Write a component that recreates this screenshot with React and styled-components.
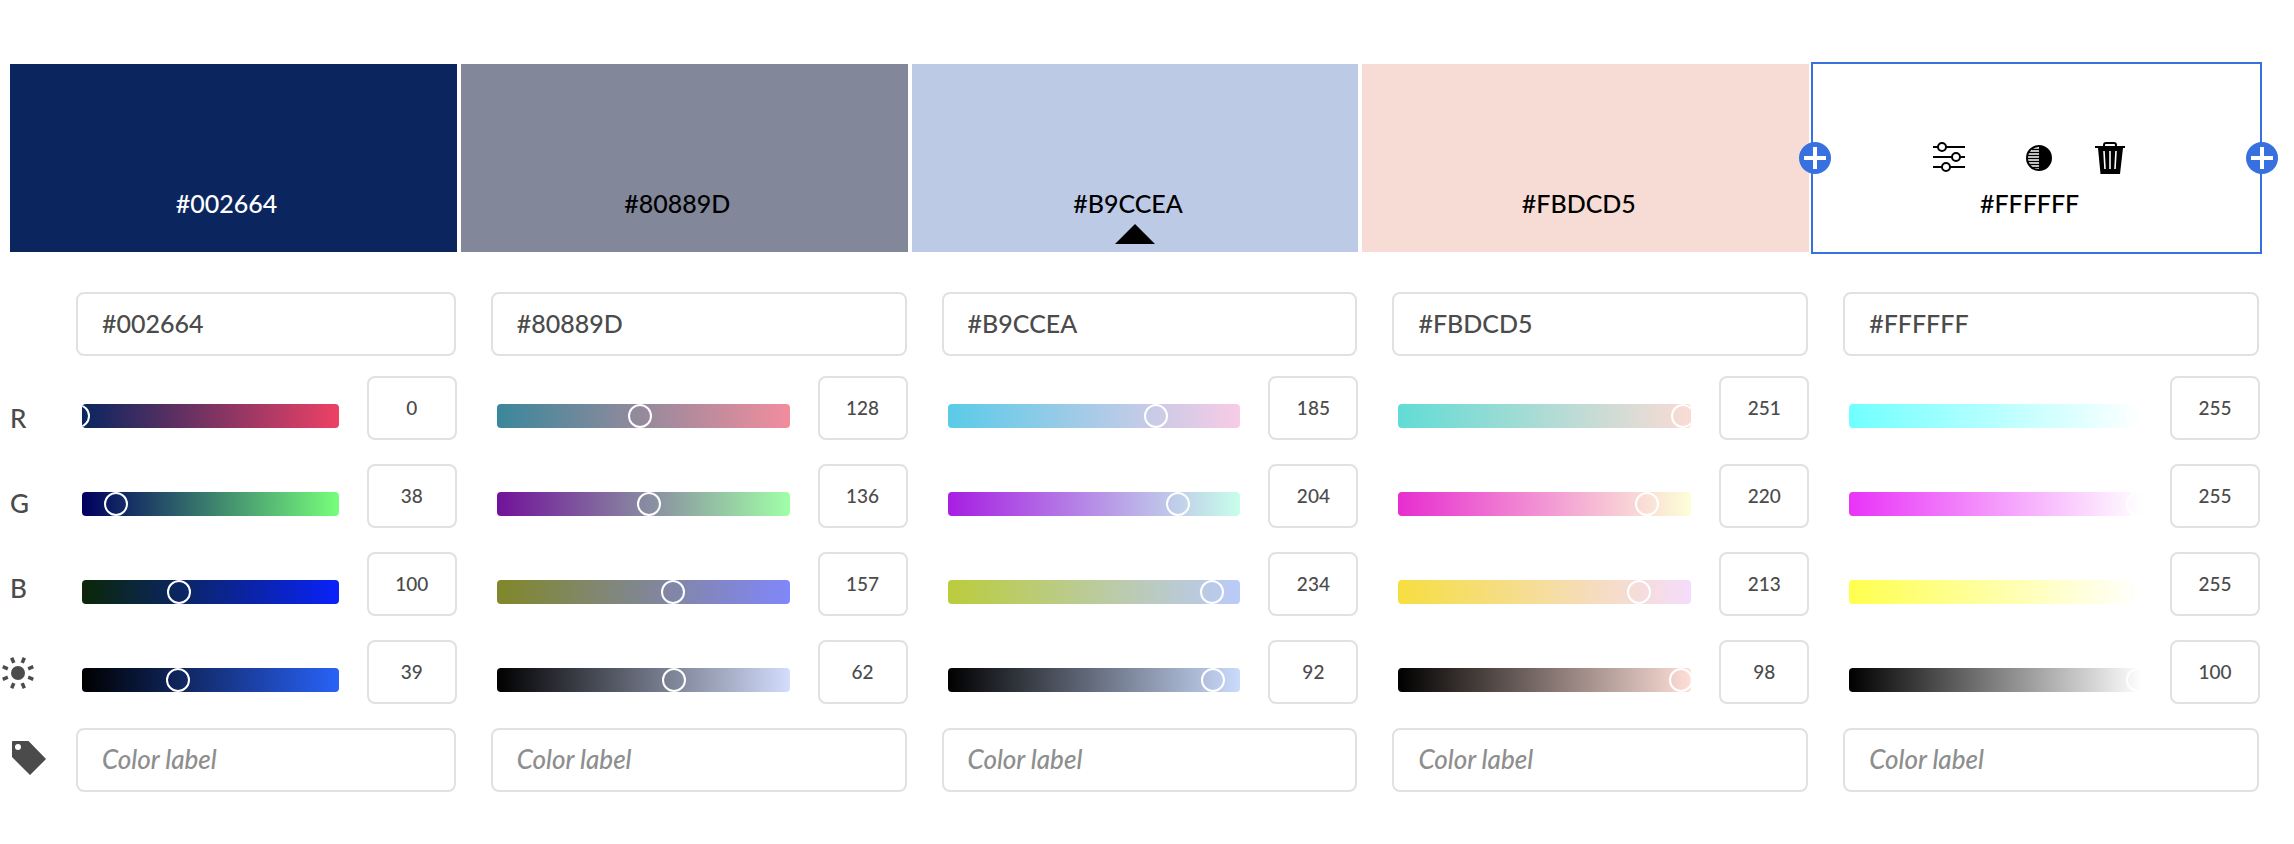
import React from "react";
import styled, { createGlobalStyle, css } from "styled-components";

const GlobalStyle = createGlobalStyle`
  *, *::before, *::after { box-sizing: border-box; }
  body {
    margin: 0;
    background: #fff;
    color: #4b4b4b;
    font-family: Lato, "Open Sans", sans-serif;
    font-size: 25px;
    line-height: 32px;
  }
  button, input { font: inherit; color: inherit; }
`;

const COLORS = [
  {
    hex: "#002664", fill: "#0b265f", ink: "#fff",
    channels: [
      { value: 0, from: "#09265f", to: "#ee4166" },
      { value: 38, from: "#00005f", to: "#77ff7b" },
      { value: 100, from: "#0b2706", to: "#0a22fa" },
      { value: 39, from: "#000", to: "#2962f8" },
    ],
  },
  {
    hex: "#80889D", fill: "#82879a", ink: "#000",
    channels: [
      { value: 128, from: "#3a879b", to: "#f28d9d" },
      { value: 136, from: "#71129a", to: "#a0ffa7" },
      { value: 157, from: "#818728", to: "#8186fb" },
      { value: 62, from: "#000", to: "#d3ddfc" },
    ],
  },
  {
    hex: "#B9CCEA", fill: "#bdcae6", ink: "#000", base: true,
    channels: [
      { value: 185, from: "#5acbe8", to: "#f8cbe6" },
      { value: 204, from: "#a71ee2", to: "#c7ffeb" },
      { value: 234, from: "#bbcc3c", to: "#bacafa" },
      { value: 92, from: "#000", to: "#cbdbfc" },
    ],
  },
  {
    hex: "#FBDCD5", fill: "#f7dcd5", ink: "#000",
    channels: [
      { value: 251, from: "#61dcd5", to: "#fadbd5" },
      { value: 220, from: "#e72dd0", to: "#fdffd7" },
      { value: 213, from: "#f6de40", to: "#f5dcfc" },
      { value: 98, from: "#000", to: "#fedfd8" },
    ],
  },
  {
    hex: "#FFFFFF", fill: "#fff", ink: "#000", selected: true,
    channels: [
      { value: 255, from: "#70ffff", to: "#fff" },
      { value: 255, from: "#e933f8", to: "#fff" },
      { value: 255, from: "#ffff4f", to: "#fff" },
      { value: 100, from: "#000", to: "#fff" },
    ],
  },
];

const CHANNELS = [
  { name: "Red", key: "red", max: 255 },
  { name: "Green", key: "green", max: 255 },
  { name: "Blue", key: "blue", max: 255 },
  { name: "Brightness", key: "brightness", max: 100 },
];

const Page = styled.main`
  padding: 64px 34px 52px 10px;
`;

const columns = css`
  display: grid;
  grid-template-columns: repeat(5, minmax(0, 1fr));
  column-gap: 4px;
`;

const Swatches = styled.section`
  ${columns}
`;

const Swatch = styled.div`
  position: relative;
  display: flex;
  flex-direction: column;
  align-items: center;
  justify-content: flex-end;
  gap: 13px;
  min-height: 188px;
  padding: 0 14px 33px 0;
  background: ${(p) => p.$fill};
  color: ${(p) => p.$ink};
  outline: ${(p) => (p.$selected ? "2px solid #3771e0" : "none")};
`;

const SwatchName = styled.span`
  font-weight: 500;
`;

const BaseMarker = styled.svg`
  position: absolute;
  left: 50%;
  bottom: 8px;
  margin-left: -20px;
`;

const AddButton = styled.button`
  position: absolute;
  top: 78px;
  ${(p) => (p.$side === "left" ? "left: -14px;" : "right: -18px;")}
  width: 32px;
  height: 32px;
  padding: 0;
  border: 0;
  border-radius: 50%;
  background: #3771e0;
  cursor: pointer;
  svg { display: block; }
`;

const Tools = styled.div`
  display: flex;
  gap: 39px;
`;

const ToolButton = styled.button`
  display: flex;
  width: ${(p) => (p.$wide ? 51 : 32)}px;
  height: 32px;
  padding: 0;
  border: 0;
  background: none;
  cursor: pointer;
`;

const Editors = styled.section`
  ${columns}
  margin-top: 40px;
`;

const Editor = styled.div`
  display: flex;
  padding-left: ${(p) => (p.$first ? 0 : 30)}px;
`;

const Legend = styled.div`
  flex: none;
  width: 66px;
  padding-top: 83px;
`;

const LegendItem = styled.label`
  display: flex;
  align-items: center;
  height: 85px;
  margin-left: ${(p) => (p.$outdent ? -10 : 0)}px;
  font-size: 26px;
  font-weight: 500;
`;

const Fields = styled.div`
  flex: 1;
  min-width: 0;
  display: flex;
  flex-direction: column;
`;

const box = css`
  height: 64px;
  border: 2px solid #e1e1e1;
  border-radius: 8px;
  background: #fff;
  outline: none;
  &:focus { border-color: #3771e0; }
`;

const TextField = styled.input`
  ${box}
  margin-right: 1px;
  padding: 0 24px 2px;
  font-weight: 500;
  &::placeholder {
    color: #8e8e8e;
    font-size: 26px;
    font-style: italic;
    opacity: 1;
  }
`;

const ChannelList = styled.div`
  display: flex;
  flex-direction: column;
  gap: 24px;
  padding: 20px 0 24px 6px;
`;

const ChannelRow = styled.div`
  display: flex;
  align-items: flex-start;
  gap: 28px;
`;

const Track = styled.div`
  flex: 1;
  min-width: 0;
  height: 24px;
  margin-top: 28px;
  overflow: hidden;
  border-radius: 4px;
  background: linear-gradient(to right, ${(p) => p.$from}, ${(p) => p.$to});
`;

const thumb = css`
  width: 24px;
  height: 24px;
  border: 2px solid #fff;
  border-radius: 50%;
  background: transparent;
`;

const Slider = styled.input`
  appearance: none;
  display: block;
  width: calc(100% + 24px);
  height: 24px;
  margin: 0 0 0 -16px;
  background: transparent;
  outline: none;
  cursor: pointer;
  &::-webkit-slider-thumb { appearance: none; ${thumb} }
  &::-moz-range-thumb { box-sizing: border-box; ${thumb} }
`;

const NumberField = styled.input`
  ${box}
  flex: none;
  width: 90px;
  padding: 0 0 2px;
  font-size: 19px;
  font-weight: 500;
  text-align: center;
`;

const AdjustIcon = () => (
  <svg width="32" height="32" viewBox="0 0 32 32" fill="none" stroke="#000" strokeWidth="2" aria-hidden="true">
    <path d="M0 5h5M13 5h19M0 15h19M27 15h5M0 25h9M17 25h15" />
    <circle cx="9" cy="5" r="4" />
    <circle cx="23" cy="15" r="4" />
    <circle cx="13" cy="25" r="4" />
  </svg>
);

const ContrastIcon = () => (
  <svg width="32" height="32" viewBox="0 0 32 32" aria-hidden="true">
    <circle cx="16" cy="16" r="12" fill="none" stroke="#000" strokeWidth="2" />
    <path d="M16 4a12 12 0 0 1 0 24z" fill="#000" />
    <path
      d="M9 7.5h7M6 10.5h10M5 13.5h11M4 16.5h12M5 19.5h11M6 22.5h10M9 25.5h7"
      stroke="#000"
      strokeWidth="1.3"
    />
  </svg>
);

const TrashIcon = () => (
  <svg width="32" height="32" viewBox="0 0 32 32" aria-hidden="true">
    <path d="M10 5V3q0-2 2-2h8q2 0 2 2v2" fill="none" stroke="#000" strokeWidth="2" />
    <path d="M1 4h30v2h-2L26 32H6.500L4 6H1z" fill="#000" />
    <path d="M10 9l1 18M16 9v18M22 9l-1 18" stroke="#fff" strokeWidth="1.600" />
  </svg>
);

const PlusIcon = () => (
  <svg width="32" height="32" viewBox="0 0 32 32" aria-hidden="true">
    <path d="M16 5v22M5 16h22" stroke="#fff" strokeWidth="4" />
  </svg>
);

const SunIcon = () => (
  <svg width="36" height="36" viewBox="-18 -18 36 36" fill="#4b4b4b" aria-hidden="true">
    <circle r="7" />
    {[0, 1, 2, 3, 4, 5, 6, 7].map((i) => (
      <rect key={i} x="-1.75" y="-16.500" width="3.500" height="5.500" transform={`rotate(${22.5 + i * 45})`} />
    ))}
  </svg>
);

const TagIcon = () => (
  <svg width="36" height="34" viewBox="0 0 36 34" aria-hidden="true">
    <path
      d="M2 1q0-1 1-1h15.500L36 18 20 34 2 16zM8 3a3 3 0 1 0 0 6a3 3 0 0 0 0-6z"
      fill="#4b4b4b"
      fillRule="evenodd"
    />
  </svg>
);

const SwatchCard = ({ color }) => (
  <Swatch $fill={color.fill} $ink={color.ink} $selected={color.selected}>
    {color.selected && (
      <>
        <AddButton type="button" $side="left" aria-label="Add color before"><PlusIcon /></AddButton>
        <AddButton type="button" $side="right" aria-label="Add color after"><PlusIcon /></AddButton>
        <Tools>
          <ToolButton type="button" $wide aria-label="Adjust color"><AdjustIcon /></ToolButton>
          <ToolButton type="button" aria-label="Show shades"><ContrastIcon /></ToolButton>
          <ToolButton type="button" aria-label="Delete color"><TrashIcon /></ToolButton>
        </Tools>
      </>
    )}
    <SwatchName>{color.hex}</SwatchName>
    {color.base && (
      <BaseMarker width="40" height="20" viewBox="0 0 40 20" aria-hidden="true">
        <path d="M20 0l20 20H0z" />
      </BaseMarker>
    )}
  </Swatch>
);

const ColorEditor = ({ color, index }) => (
  <Editor $first={index === 0}>
    {index === 0 && (
      <Legend>
        <LegendItem htmlFor="red-0">R</LegendItem>
        <LegendItem htmlFor="green-0">G</LegendItem>
        <LegendItem htmlFor="blue-0">B</LegendItem>
        <LegendItem htmlFor="brightness-0" $outdent><SunIcon /></LegendItem>
        <LegendItem htmlFor="label-0"><TagIcon /></LegendItem>
      </Legend>
    )}
    <Fields>
      <TextField type="text" defaultValue={color.hex} aria-label={`Hex code of color ${index + 1}`} />
      <ChannelList>
        {CHANNELS.map((channel, i) => {
          const { value, from, to } = color.channels[i];
          return (
            <ChannelRow key={channel.key}>
              <Track $from={from} $to={to}>
                <Slider
                  id={`${channel.key}-${index}`}
                  type="range"
                  min="0"
                  max={channel.max}
                  defaultValue={value}
                  aria-label={`${channel.name} of color ${index + 1}`}
                />
              </Track>
              <NumberField
                type="text"
                inputMode="numeric"
                defaultValue={value}
                aria-label={`${channel.name} value of color ${index + 1}`}
              />
            </ChannelRow>
          );
        })}
      </ChannelList>
      <TextField
        id={`label-${index}`}
        type="text"
        placeholder="Color label"
        aria-label={`Label of color ${index + 1}`}
      />
    </Fields>
  </Editor>
);

export default function App() {
  return (
    <>
      <GlobalStyle />
      <Page>
        <Swatches>
          {COLORS.map((color) => <SwatchCard key={color.hex} color={color} />)}
        </Swatches>
        <Editors>
          {COLORS.map((color, i) => <ColorEditor key={color.hex} color={color} index={i} />)}
        </Editors>
      </Page>
    </>
  );
}
